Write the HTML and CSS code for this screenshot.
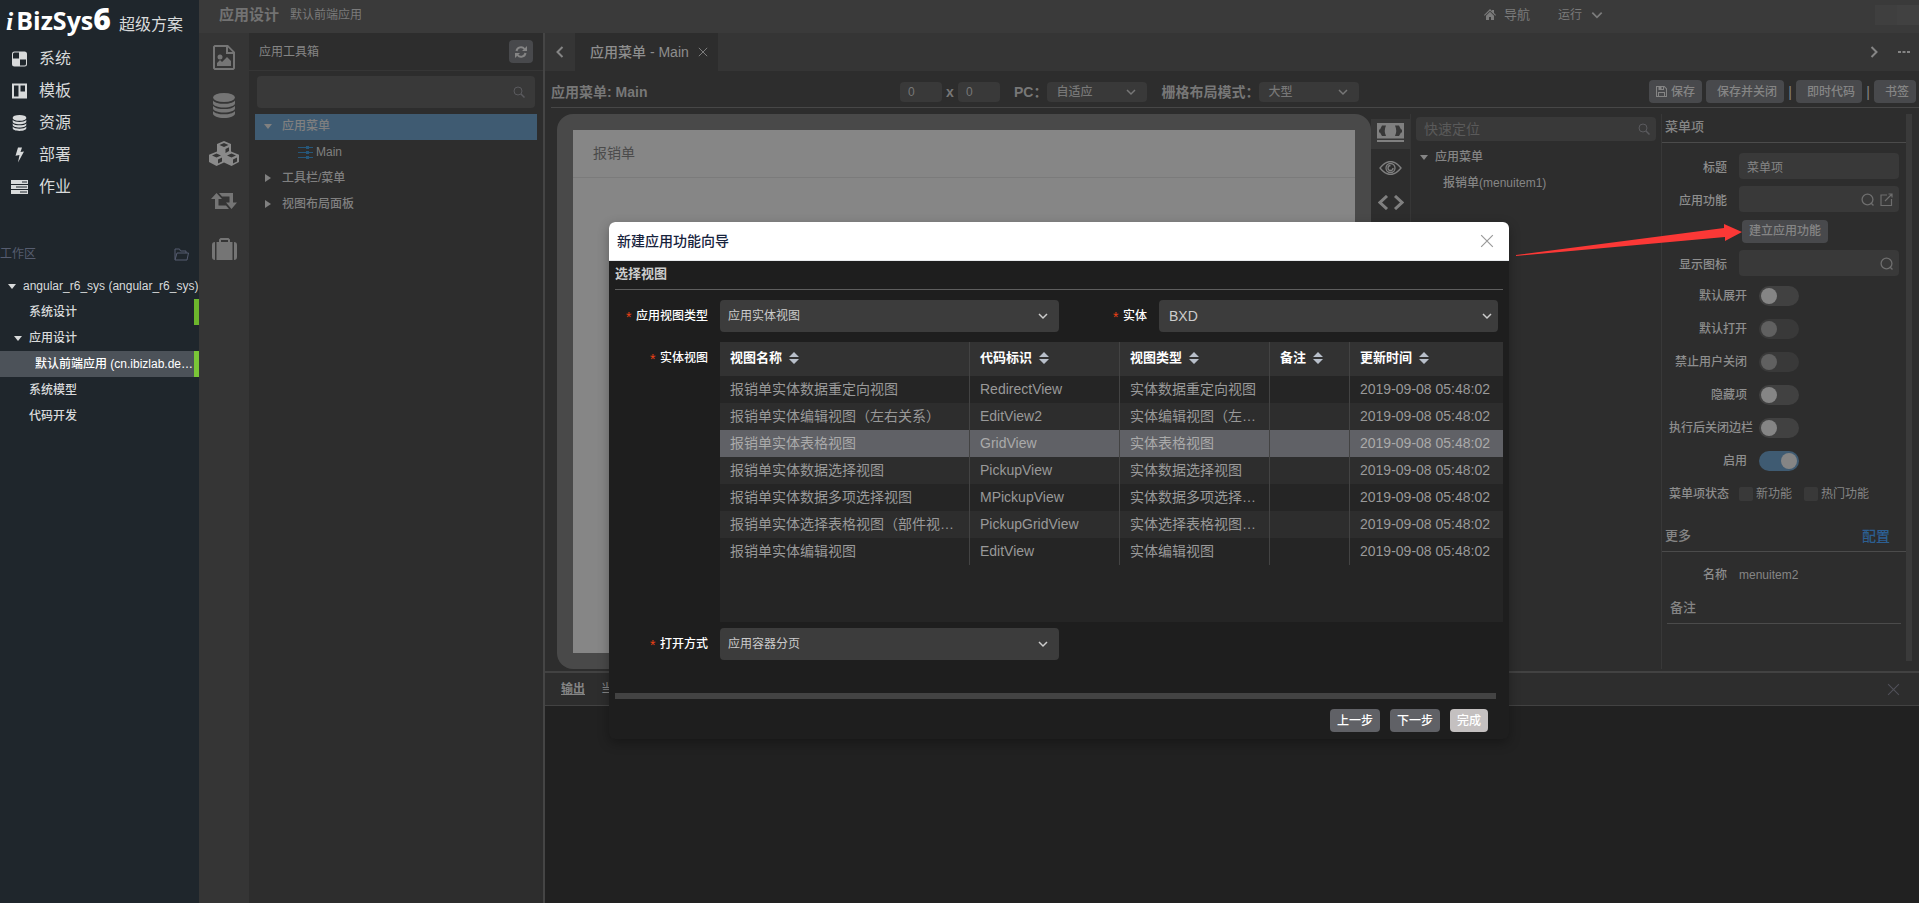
FILE: index.html
```html
<!DOCTYPE html>
<html lang="zh-CN">
<head>
    <meta charset="utf-8">
    <title>iBizSys6 应用设计</title>
    <link rel="stylesheet" href="styles.css">
</head>
<body>
    <svg class="sprite" aria-hidden="true">
        <symbol id="i-down" viewBox="0 0 12 12"><path d="M2 4l4 4 4-4" fill="none" stroke="currentColor" stroke-width="1.5"/></symbol>
        <symbol id="i-left" viewBox="0 0 12 12"><path d="M8.500 1L3.500 6l5 5" fill="none" stroke="currentColor" stroke-width="2"/></symbol>
        <symbol id="i-right" viewBox="0 0 12 12"><path d="M3.500 1l5 5-5 5" fill="none" stroke="currentColor" stroke-width="2"/></symbol>
        <symbol id="i-close" viewBox="0 0 12 12"><path d="M1 1l10 10M11 1L1 11" fill="none" stroke="currentColor"/></symbol>
        <symbol id="i-search" viewBox="0 0 12 12"><circle cx="5" cy="5" r="4" fill="none" stroke="currentColor"/><path d="M8 8l3.500 3.500" stroke="currentColor" stroke-width="1.500"/></symbol>
        <symbol id="i-find" viewBox="0 0 12 12"><circle cx="6" cy="6" r="5" fill="none" stroke="currentColor" stroke-width="1.200"/><path d="M9 9l2.500 2.500" stroke="currentColor" stroke-width="1.200"/></symbol>
        <symbol id="i-open" viewBox="0 0 13 13"><path d="M7 2H1v10.500h10.500V6M8.500 1H12v3.500M12 1L5 8" fill="none" stroke="currentColor" stroke-width="1.200"/></symbol>
        <symbol id="i-caret-down" viewBox="0 0 8 5"><path d="M0 0h8L4 5z" fill="currentColor"/></symbol>
        <symbol id="i-caret-right" viewBox="0 0 6 8"><path d="M0 0l6 4-6 4z" fill="currentColor"/></symbol>
        <symbol id="i-sort" viewBox="0 0 10 12"><path d="M5 0l5 5H0zM0 7h10l-5 5z" fill="currentColor"/></symbol>
        <symbol id="i-database" viewBox="0 0 22 25">
            <ellipse cx="11" cy="4.500" rx="11" ry="4.500"/>
            <path d="M0 7.500c2 2.600 6.500 3.300 11 3.300s9-.7 11-3.300v2.700c0 2.500-5 4.300-11 4.300S0 12.700 0 10.200z"/>
            <path d="M0 12.800c2 2.600 6.500 3.300 11 3.300s9-.7 11-3.300v2.500c0 2.500-5 4.300-11 4.300S0 17.800 0 15.300z"/>
            <path d="M0 18c2 2.600 6.500 3.300 11 3.300s9-.7 11-3.300v2.500C22 23 17 25 11 25S0 23 0 20.500z"/>
        </symbol>
    </svg>

    <aside class="sidebar">
        <div class="brand"><span class="brand-name"><i>i</i>BizSys<b>6</b></span><span class="brand-plan">超级方案</span></div>
        <nav class="main-nav">
            <a href="#"><svg viewBox="0 0 15 15"><path fill-rule="evenodd" d="M2.500 0h10A2.500 2.500 0 0 1 15 2.500v10a2.500 2.500 0 0 1-2.500 2.500h-10A2.500 2.500 0 0 1 0 12.500v-10A2.500 2.500 0 0 1 2.500 0zM1 7h6V1H2.500Q1 1 1 2.500zM8 8v6h4.500q1.500 0 1.500-1.500V8z"/></svg>系统</a>
            <a href="#"><svg viewBox="0 0 15 15"><path fill-rule="evenodd" d="M0 0h15v15H0zM2 2v11h4.500V2zM8.500 2v6H13V2z"/></svg>模板</a>
            <a href="#"><svg viewBox="0 0 22 25"><use href="#i-database"/></svg>资源</a>
            <a href="#"><svg viewBox="0 0 15 15"><path d="M6 0h4L8.500 4.500 12 4 6 15l1.500-7.500-4 .8z"/></svg>部署</a>
            <a href="#"><svg class="wide" viewBox="0 0 17 14"><path fill-rule="evenodd" d="M0 0h17v4H0zM0 5h17v4H0zM0 10h17v4H0zM11 1.500v1h5v-1zM5 6.500v1h11v-1zM9 11.500v1h7v-1z"/></svg>作业</a>
        </nav>
        <div class="zone"><span>工作区</span>
            <svg viewBox="0 0 15 13"><path d="M1 11.500V1h4.500l1 2H12v2M1 12l2-7h11.500L13 12z" fill="none" stroke="currentColor"/></svg>
        </div>
        <ul class="work-tree">
            <li><svg class="caret"><use href="#i-caret-down"/></svg><span>angular_r6_sys (angular_r6_sys)</span></li>
            <li class="lv2 marked"><span>系统设计</span></li>
            <li class="lv2 parent"><svg class="caret"><use href="#i-caret-down"/></svg><span>应用设计</span></li>
            <li class="lv3 marked selected"><span>默认前端应用 (cn.ibizlab.demo)</span></li>
            <li class="lv2"><span>系统模型</span></li>
            <li class="lv2"><span>代码开发</span></li>
        </ul>
    </aside>

    <div class="workspace">
        <header class="topbar">
            <h1>应用设计</h1>
            <span class="app-name">默认前端应用</span>
            <a class="top-nav" href="#"><svg viewBox="0 0 12 11"><path d="M6 0l2 2V1h2v3l2 2-.7.7L6 1.700.7 6.700 0 6zM6 2.800l4 3.900V11H7V8H5v3H2V6.700z"/></svg>导航</a>
            <a class="top-run" href="#">运行 <svg viewBox="0 0 12 12"><use href="#i-down"/></svg></a>
            <div class="user"><span></span><span></span></div>
        </header>

        <div class="columns">
            <nav class="rail">
                <a href="#" title="视图"><svg width="22" height="25" viewBox="0 0 22 25"><path fill-rule="evenodd" d="M1.500 0H15l7 7v16.500L20.500 25h-19L0 23.500v-22zM2 2v21h18V9h-7V2zM15 2.500V7h4.500z"/><circle cx="7" cy="12" r="2.500"/><path d="M4 21v-3l3-3 2 2 5-5 4 4v5z"/></svg></a>
                <a href="#" title="数据"><svg width="22" height="25"><use href="#i-database"/></svg></a>
                <a href="#" title="部件" class="on"><svg width="30" height="25" viewBox="0 0 30 25"><path fill-rule="evenodd" d="M15 0l7 3v7.500l8 3.200V21l-7.500 4-7.500-3.500L7.500 25 0 21v-7.300l8-3.200V3zM15 2l-4.500 2L15 6l4.500-2zM16.500 8v4l3.500-2V6.300zM7.500 12.500L3 14.500l4.500 2 4.500-2zM9 18.500v4l4-2v-4zM22.500 12.500l-4.500 2 4.500 2 4.500-2zM24 18.500v4l4-2v-4z"/></svg></a>
                <a href="#" title="流程"><svg width="26" height="16" viewBox="0 0 26 16"><path d="M5.500 0L11 6H7.500v6.500H15l3 3.500H4V6H0zM8 0h14v9.500h4L20.500 16 15 9.500h3.500v-6H11z"/></svg></a>
                <a href="#" title="工具"><svg width="25" height="22" viewBox="0 0 25 22"><path d="M3 4v18Q0 22 0 19V7q0-3 3-3zM22 4v18q3 0 3-3V7q0-3-3-3z"/><path fill-rule="evenodd" d="M4.500 4H7V1.500L8.500 0h8L18 1.500V4h2.500v18h-16zM9 2v2h7V2z"/></svg></a>
            </nav>

            <section class="toolbox">
                <div class="toolbox-head">
                    <h2>应用工具箱</h2>
                    <button type="button" class="btn refresh" aria-label="刷新"><svg width="12" height="12" viewBox="0 0 12 12"><path d="M1.500 5A4.500 4.500 0 0 1 9.500 3M10.500 7a4.500 4.500 0 0 1-8 2" fill="none" stroke="currentColor" stroke-width="2"/><path d="M12 0v5H7zM0 12V7h5z"/></svg></button>
                </div>
                <label class="box search"><input type="text" aria-label="搜索工具箱"><svg width="12" height="12"><use href="#i-search"/></svg></label>
                <ul class="tool-tree">
                    <li class="selected"><svg class="caret"><use href="#i-caret-down"/></svg>应用菜单</li>
                    <li class="leaf"><svg width="15" height="13" viewBox="0 0 15 13"><path d="M0 1.500h8M11 1.500h4M0 6.500h8M11 6.500h4M0 11.500h8M11 11.500h4" stroke="#26577a"/><path d="M9.500 0v3M9.500 5v3M9.500 10v3" stroke="#26577a" stroke-width="3"/></svg>Main</li>
                    <li><svg class="caret side"><use href="#i-caret-right"/></svg>工具栏/菜单</li>
                    <li><svg class="caret side"><use href="#i-caret-right"/></svg>视图布局面板</li>
                </ul>
            </section>

            <main class="editor">
                <div class="tabs">
                    <button type="button" class="tab-arrow" aria-label="向左"><svg width="12" height="12"><use href="#i-left"/></svg></button>
                    <div class="tab">应用菜单 - Main <button type="button" aria-label="关闭"><svg width="10" height="10"><use href="#i-close"/></svg></button></div>
                    <button type="button" class="tab-arrow next" aria-label="向右"><svg width="12" height="12"><use href="#i-right"/></svg></button>
                    <button type="button" class="tab-arrow" aria-label="更多"><svg width="12" height="12" viewBox="0 0 12 12"><path d="M0 5h3v2H0zM4.500 5h3v2h-3zM9 5h3v2H9z" fill="currentColor"/></svg></button>
                </div>

                <div class="toolbar">
                    <h2>应用菜单: Main</h2>
                    <div class="sizing">
                        <input class="box num" type="text" value="0" aria-label="宽度">
                        <b>x</b>
                        <input class="box num" type="text" value="0" aria-label="高度">
                        <label class="caption" for="pc">PC：</label>
                        <span class="pick"><select class="box" id="pc"><option>自适应</option></select><svg width="12" height="12"><use href="#i-down"/></svg></span>
                        <label class="caption" for="grid-mode">栅格布局模式：</label>
                        <span class="pick"><select class="box" id="grid-mode"><option>大型</option></select><svg width="12" height="12"><use href="#i-down"/></svg></span>
                    </div>
                    <div class="actions">
                        <button type="button" class="btn save"><svg width="11" height="11" viewBox="0 0 11 11"><path fill-rule="evenodd" d="M0 0h8.500L11 2.500V11H0zM1 1v9h1V6h7v4h1V3L8 1v3H2.500V1zM5.500 1v2H7V1zM3 7v3h5V7z"/></svg>保存</button>
                        <button type="button" class="btn">保存并关闭</button><i>|</i>
                        <button type="button" class="btn">即时代码</button><i>|</i>
                        <button type="button" class="btn">书签</button>
                    </div>
                </div>

                <div class="design">
                    <div class="device"><div class="screen"><div class="menu-item">报销单</div></div></div>

                    <nav class="mode-rail">
                        <a href="#" class="on" title="设计"><svg width="27" height="19" viewBox="0 0 27 19"><path fill-rule="evenodd" d="M0 0h27v15.500H0zM2 6.500v3h1l2 3.500h4Q6.500 8 9 2.500H5L3 6.500zM18 2.500Q20.500 8 18 13h4l2-3.500h1v-3h-1l-2-4zM0 17h27v2H0z"/></svg></a>
                        <a href="#" title="预览"><svg width="23" height="14" viewBox="0 0 23 14"><g fill="none" stroke="currentColor" stroke-width="1.300"><path d="M1 7Q11.500-6 22 7 11.500 20 1 7z"/><circle cx="11.500" cy="7" r="4.500"/><path d="M11.500 4.500A2.500 2.500 0 1 0 14 7"/></g></svg></a>
                        <a href="#" title="代码"><svg width="26" height="15" viewBox="0 0 26 15"><path d="M9 1L2 7.500 9 14M17 1l7 6.500L17 14" fill="none" stroke="currentColor" stroke-width="3"/></svg></a>
                    </nav>

                    <section class="outline">
                        <label class="box search small"><input type="text" placeholder="快速定位" aria-label="快速定位"><svg width="12" height="12"><use href="#i-search"/></svg></label>
                        <ul>
                            <li><svg class="caret"><use href="#i-caret-down"/></svg>应用菜单</li>
                            <li class="child">报销单(menuitem1)</li>
                        </ul>
                    </section>

                    <section class="props">
                        <div class="props-body">
                            <h3>菜单项</h3>
                            <div class="group">
                                <div class="field"><label for="p-title">标题</label><input class="box" id="p-title" type="text" value="菜单项"></div>
                                <div class="field"><label for="p-func">应用功能</label><span class="box with-icons"><input id="p-func" type="text"><svg width="13" height="13"><use href="#i-find"/></svg><svg width="13" height="13"><use href="#i-open"/></svg></span></div>
                                <div class="field create">
                                    <div class="create-wrap">
                                        <button type="button" class="btn">建立应用功能</button>
                                        <svg class="pointer" width="226" height="33" viewBox="0 0 226 33"><path d="M0 31L208 4V0l18 8-17 9v-4L0 32z" fill="#fb3836"/></svg>
                                    </div>
                                </div>
                                <div class="field"><label for="p-icon">显示图标</label><span class="box with-icons"><input id="p-icon" type="text"><svg width="13" height="13"><use href="#i-find"/></svg></span></div>
                                <div class="toggle"><label for="s1">默认展开</label><input type="checkbox" role="switch" id="s1"></div>
                                <div class="toggle"><label for="s2">默认打开</label><input type="checkbox" role="switch" id="s2" disabled></div>
                                <div class="toggle"><label for="s3">禁止用户关闭</label><input type="checkbox" role="switch" id="s3" disabled></div>
                                <div class="toggle"><label for="s4">隐藏项</label><input type="checkbox" role="switch" id="s4"></div>
                                <div class="toggle"><label for="s5">执行后关闭边栏</label><input type="checkbox" role="switch" id="s5"></div>
                                <div class="toggle"><label for="s6">启用</label><input type="checkbox" role="switch" id="s6" checked></div>
                                <div class="field states"><span>菜单项状态</span>
                                    <div class="checks">
                                        <label><input type="checkbox">新功能</label>
                                        <label><input type="checkbox">热门功能</label>
                                    </div>
                                </div>
                            </div>
                            <h3 class="more">更多 <a href="#">配置</a></h3>
                            <div class="group">
                                <div class="field"><span>名称</span><output>menuitem2</output></div>
                                <h3 class="inset">备注</h3>
                            </div>
                        </div>
                        <div class="scrollbar"></div>
                    </section>
                </div>

                <section class="output">
                    <div class="output-tabs">
                        <a href="#" class="on">输出</a>
                        <a href="#">当前</a>
                        <button type="button" aria-label="关闭输出"><svg width="13" height="13"><use href="#i-close"/></svg></button>
                    </div>
                </section>
            </main>
        </div>

        <div class="overlay">
            <div class="dialog" role="dialog" aria-labelledby="dlg-title">
                <div class="dialog-head"><h2 id="dlg-title">新建应用功能向导</h2><button type="button" aria-label="关闭"><svg width="14" height="14"><use href="#i-close"/></svg></button></div>
                <div class="dialog-body">
                    <h3>选择视图</h3>
                    <div class="form-row">
                        <label for="view-kind">应用视图类型</label>
                        <span class="pick"><select id="view-kind"><option>应用实体视图</option></select><svg width="12" height="12"><use href="#i-down"/></svg></span>
                        <label for="entity">实体</label>
                        <span class="pick entity"><select id="entity"><option>BXD</option></select><svg width="12" height="12"><use href="#i-down"/></svg></span>
                    </div>
                    <div class="form-row grid-row">
                        <label id="grid-label">实体视图</label>
                        <div class="grid">
                            <table aria-labelledby="grid-label">
                                <colgroup><col class="c-name"><col class="c-code"><col class="c-type"><col class="c-memo"><col></colgroup>
                                <thead>
                                    <tr>
                                        <th>视图名称<svg><use href="#i-sort"/></svg></th>
                                        <th>代码标识<svg><use href="#i-sort"/></svg></th>
                                        <th>视图类型<svg><use href="#i-sort"/></svg></th>
                                        <th>备注<svg><use href="#i-sort"/></svg></th>
                                        <th>更新时间<svg><use href="#i-sort"/></svg></th>
                                    </tr>
                                </thead>
                                <tbody>
                                    <tr><td>报销单实体数据重定向视图</td><td>RedirectView</td><td>实体数据重定向视图</td><td></td><td>2019-09-08 05:48:02</td></tr>
                                    <tr><td>报销单实体编辑视图（左右关系）</td><td>EditView2</td><td>实体编辑视图（左右关系）</td><td></td><td>2019-09-08 05:48:02</td></tr>
                                    <tr class="selected"><td>报销单实体表格视图</td><td>GridView</td><td>实体表格视图</td><td></td><td>2019-09-08 05:48:02</td></tr>
                                    <tr><td>报销单实体数据选择视图</td><td>PickupView</td><td>实体数据选择视图</td><td></td><td>2019-09-08 05:48:02</td></tr>
                                    <tr><td>报销单实体数据多项选择视图</td><td>MPickupView</td><td>实体数据多项选择视图</td><td></td><td>2019-09-08 05:48:02</td></tr>
                                    <tr><td>报销单实体选择表格视图（部件视图）</td><td>PickupGridView</td><td>实体选择表格视图（部件视图）</td><td></td><td>2019-09-08 05:48:02</td></tr>
                                    <tr><td>报销单实体编辑视图</td><td>EditView</td><td>实体编辑视图</td><td></td><td>2019-09-08 05:48:02</td></tr>
                                </tbody>
                            </table>
                        </div>
                    </div>
                    <div class="form-row open-row">
                        <label for="open-mode">打开方式</label>
                        <span class="pick"><select id="open-mode"><option>应用容器分页</option></select><svg width="12" height="12"><use href="#i-down"/></svg></span>
                    </div>
                    <div class="hscroll"></div>
                    <div class="dialog-foot">
                        <button type="button" class="btn">上一步</button>
                        <button type="button" class="btn">下一步</button>
                        <button type="button" class="btn finish">完成</button>
                    </div>
                </div>
            </div>
        </div>
    </div>
</body>
</html>
```

FILE: styles.css
```css
* {
    box-sizing: border-box;
}

body {
    margin: 0;
    display: flex;
    height: 100vh;
    overflow: hidden;
    background: #2d2d2d;
    color: #858585;
    font: 12px/18px "Liberation Sans", "Noto Sans CJK SC", sans-serif;
}

h1, h2, h3, ul {
    margin: 0;
    padding: 0;
    font-size: 12px;
    font-weight: normal;
}

ul {
    list-style: none;
}

a {
    color: inherit;
    text-decoration: none;
}

svg {
    flex: none;
    fill: currentColor;
}

button, input, select {
    margin: 0;
    padding: 0;
    border: 0;
    background: none;
    color: inherit;
    font: inherit;
}

.sprite {
    position: absolute;
    width: 0;
    height: 0;
}

.box {
    background: #393939;
    border-radius: 4px;
}

.btn {
    height: 23px;
    padding: 0 7px;
    border-radius: 4px;
    background: #48494c;
    font-weight: 500;
    white-space: nowrap;
}

.caret {
    width: 8px;
    height: 5px;
}

.caret.side {
    width: 6px;
    height: 8px;
}

/* select with its own arrow */
.pick {
    display: grid;
    align-items: center;
}

.pick select,
.pick svg {
    grid-area: 1 / 1;
}

.pick select {
    width: 100%;
    appearance: none;
}

.pick svg {
    justify-self: end;
    margin-right: 10px;
    pointer-events: none;
}

/* left sidebar */
.sidebar {
    flex: none;
    width: 199px;
    background: #1f262c;
    color: #d8dadb;
}

.brand {
    display: flex;
    align-items: baseline;
    height: 43px;
    padding-left: 6px;
    color: #fff;
    line-height: 38px;
}

.brand-name {
    width: 113px;
    font-family: "Open Sans", sans-serif;
    font-size: 25px;
    font-weight: bold;
}

.brand-name i {
    margin-right: 3px;
    font-family: "Liberation Serif", serif;
    font-size: 26px;
}

.brand-name b {
    font-size: 30px;
}

.brand-plan {
    font-size: 16px;
    color: #d8dadb;
}

.main-nav a {
    display: flex;
    align-items: center;
    gap: 12px;
    height: 32px;
    padding-left: 12px;
    font-size: 16px;
}

.main-nav svg {
    width: 15px;
    height: 16px;
}

.main-nav svg.wide {
    width: 17px;
    margin: 0 -1px;
}

.zone {
    display: flex;
    align-items: center;
    justify-content: space-between;
    margin-top: 42px;
    padding-right: 10px;
    height: 18px;
    color: #565d70;
}

.zone svg {
    width: 15px;
    height: 13px;
}

.work-tree {
    margin-top: 10px;
    font-weight: 500;
}

.work-tree li {
    display: flex;
    align-items: center;
    gap: 7px;
    height: 26px;
    padding-left: 8px;
    white-space: nowrap;
}

.work-tree .lv2 {
    padding-left: 29px;
}

.work-tree .parent {
    padding-left: 14px;
}

.work-tree .lv3 {
    padding-left: 35px;
}

.work-tree .marked {
    border-right: 5px solid #6cb62c;
}

.work-tree .selected {
    border-color: #7ac537;
    background: #4c5259;
    color: #fff;
}

.work-tree .lv3 span {
    overflow: hidden;
    text-overflow: ellipsis;
}

/* workspace */
.workspace {
    position: relative;
    flex: 1;
    min-width: 0;
    display: flex;
    flex-direction: column;
}

.topbar {
    display: flex;
    align-items: center;
    flex: none;
    height: 33px;
    padding: 0 0 4px 20px;
    background: #3a3a3a;
    color: #7b7b7b;
}

.topbar h1 {
    margin-right: 11px;
    font-size: 15px;
    font-weight: bold;
    color: #727272;
}

.app-name {
    flex: 1;
}

.top-nav {
    display: flex;
    align-items: center;
    gap: 8px;
    font-size: 13px;
}

.top-nav svg {
    width: 12px;
    height: 11px;
}

.top-run {
    display: flex;
    align-items: center;
    gap: 8px;
    margin: 0 271px 0 28px;
}

.top-run svg {
    width: 14px;
    height: 14px;
}

.user {
    display: flex;
    width: 44px;
    height: 20px;
    background: #3e3e3e;
}

.user span {
    flex: 1;
    background: #3f3f3f;
}

.user span + span {
    background: #414141;
}

.columns {
    flex: 1;
    display: flex;
    min-height: 0;
}

.rail {
    flex: none;
    width: 50px;
    background: #353535;
    color: #757575;
}

.rail a {
    display: flex;
    align-items: center;
    justify-content: center;
    height: 48px;
}

.rail a.on {
    color: #8a8a8a;
}

.toolbox {
    flex: none;
    width: 296px;
    border-right: 2px solid #454545;
}

.toolbox-head {
    display: flex;
    align-items: center;
    justify-content: space-between;
    height: 38px;
    padding: 0 10px;
    border-bottom: 1px solid #363636;
}

.refresh {
    display: flex;
    align-items: center;
    width: 24px;
    padding: 0 6px;
}

.search {
    display: flex;
    align-items: center;
    height: 32px;
    margin: 5px 8px 6px;
    padding: 0 10px;
    color: #5a5a5e;
}

.search input {
    flex: 1;
    min-width: 0;
    font-size: 14px;
    color: #858585;
}

.search input::placeholder {
    color: #5a5a5a;
}

.search.small {
    height: 24px;
    margin: 3px 5px;
    padding: 0 6px 0 8px;
}

.tool-tree {
    margin: 0 6px;
    font-weight: 500;
    color: #808080;
}

.tool-tree li {
    display: flex;
    align-items: center;
    gap: 10px;
    height: 26px;
    padding: 0 0 2px 9px;
}

.tool-tree .side {
    margin: 0 1px;
}

.tool-tree .leaf {
    gap: 3px;
    padding-left: 43px;
}

.tool-tree .selected {
    background: #3f5b72;
}

/* editor */
.editor {
    flex: 1;
    min-width: 0;
    display: flex;
    flex-direction: column;
}

.tabs {
    display: flex;
    flex: none;
    height: 38px;
    background: #353535;
}

.tab-arrow {
    display: flex;
    align-items: center;
    justify-content: center;
    width: 30px;
}

.tab-arrow.next {
    margin-left: auto;
}

.tab {
    display: flex;
    align-items: center;
    gap: 9px;
    padding: 0 10px 0 15px;
    background: #2d2d2d;
    color: #8e8e8e;
    font-size: 14px;
    font-weight: 500;
}

.tab button {
    display: flex;
}

.toolbar {
    display: flex;
    align-items: center;
    flex: none;
    height: 37px;
    margin-left: 6px;
    padding-top: 5px;
    border-bottom: 1px solid #474747;
}

.toolbar h2 {
    flex: 0 1 349px;
    font-size: 14px;
    font-weight: bold;
    white-space: nowrap;
    color: #777;
}

.sizing {
    display: flex;
    align-items: center;
    font-size: 14px;
    font-weight: bold;
    white-space: nowrap;
    color: #777;
}

.sizing b {
    width: 16px;
    text-align: center;
}

.num {
    width: 42px;
    height: 20px;
    padding-left: 8px;
    font-size: 12px;
    font-weight: normal;
}

.caption {
    margin-left: 14px;
}

.sizing .pick {
    width: 100px;
    font-size: 12px;
    font-weight: 500;
}

.sizing select {
    height: 20px;
    padding-left: 9px;
}

.actions {
    flex: 1;
    display: flex;
    align-items: center;
    justify-content: flex-end;
    padding-right: 3px;
}

.actions .btn {
    padding-left: 11px;
}

.actions .save {
    display: flex;
    align-items: center;
    gap: 4px;
    margin-right: 4px;
    padding-left: 7px;
}

.actions i {
    width: 12px;
    font-size: 14px;
    font-style: normal;
    text-align: center;
}

.design {
    flex: 1;
    display: flex;
    min-height: 0;
    padding: 6px 7px 2px 12px;
}

.device {
    flex: 1;
    padding: 16px;
    border-radius: 16px;
    background: #494949;
}

.screen {
    height: 100%;
    background: #868686;
}

.menu-item {
    height: 48px;
    padding-left: 20px;
    border-bottom: 1px solid #7b7b7b;
    color: #4b4b4b;
    font-size: 14px;
    line-height: 46px;
}

.mode-rail {
    width: 40px;
    padding-top: 5px;
    border-right: 1px solid #363636;
    color: #808080;
}

.mode-rail a {
    display: flex;
    align-items: center;
    justify-content: center;
    height: 30px;
    margin-bottom: 5px;
    padding-bottom: 3px;
}

.mode-rail .on {
    background: #383838;
}

.outline {
    width: 251px;
    border-right: 1px solid #383838;
}

.outline li {
    display: flex;
    align-items: center;
    gap: 7px;
    height: 26px;
    padding-left: 9px;
    font-weight: 500;
}

.outline .child {
    padding-left: 32px;
}

/* property panel */
.props {
    flex: none;
    display: flex;
    width: 250px;
}

.props-body {
    flex: 1;
}

.props h3 {
    height: 29px;
    padding: 0 3px;
    border-bottom: 1px solid #4b4b4b;
    font-size: 13px;
    font-weight: 500;
    line-height: 26px;
}

.props h3.inset {
    margin: 0 5px;
}

.props .more {
    display: flex;
    justify-content: space-between;
    margin-top: 16px;
    padding-right: 16px;
}

.more a {
    color: #2c5f92;
    font-size: 14px;
}

.group {
    padding-top: 10px;
}

.field {
    display: grid;
    grid-template-columns: 65px 160px;
    column-gap: 12px;
    align-items: center;
    height: 26px;
    margin-bottom: 7px;
}

.field > label,
.field > span:first-child,
.toggle label {
    font-weight: 500;
    text-align: right;
    white-space: nowrap;
    color: #8e8e8e;
}

.field > label {
    padding-top: 3px;
}

.field > .box {
    width: 100%;
    height: 26px;
    padding: 0 6px 0 8px;
}

.with-icons {
    display: flex;
    align-items: center;
    gap: 6px;
    color: #6e6e6e;
}

.with-icons input {
    flex: 1;
    min-width: 0;
}

.field.create {
    height: 24px;
}

.create-wrap {
    position: relative;
    grid-column: 2;
    margin-left: 3px;
}

/* red pointer drawn across the panels to the button */
.pointer {
    position: absolute;
    right: 100%;
    top: 4px;
}

.toggle {
    display: flex;
    align-items: center;
    gap: 12px;
    height: 26px;
    margin-bottom: 7px;
    padding-left: 7px;
}

.toggle label {
    width: 78px;
}

.toggle input {
    display: flex;
    align-items: center;
    width: 40px;
    height: 20px;
    padding: 0 2px;
    border-radius: 10px;
    background: #414141;
    appearance: none;
}

.toggle input::before {
    content: "";
    width: 16px;
    height: 16px;
    border-radius: 50%;
    background: #858585;
}

.toggle input:disabled {
    background: #393939;
}

.toggle input:disabled::before {
    background: #606060;
}

.toggle input:checked {
    justify-content: flex-end;
    background: #3f5b72;
}

.group .states {
    column-gap: 10px;
    grid-template-columns: 67px 160px;
    margin-bottom: 0;
}

.checks {
    display: flex;
    gap: 12px;
}

.checks label {
    display: flex;
    align-items: center;
    gap: 3px;
    white-space: nowrap;
}

.checks input {
    width: 14px;
    height: 14px;
    border-radius: 2px;
    background: #393939;
    appearance: none;
}

.scrollbar {
    width: 6px;
    margin-bottom: 8px;
    background: #3a3a3a;
}

/* output panel */
.output {
    flex: none;
    height: 232px;
    border-top: 2px solid #424242;
    background: #212121;
}

.output-tabs {
    display: flex;
    align-items: center;
    gap: 16px;
    height: 33px;
    padding: 0 19px 0 16px;
    border-bottom: 1px solid #424242;
    background: #2d2d2d;
}

.output-tabs .on {
    font-weight: bold;
    text-decoration: underline;
}

.output-tabs button {
    display: flex;
    margin-left: auto;
    color: #505058;
}

/* wizard dialog */
.overlay {
    position: absolute;
    inset: 0;
    display: flex;
    justify-content: center;
    align-items: flex-start;
    padding-top: 222px;
    pointer-events: none;
}

.dialog {
    width: 900px;
    border-radius: 6px;
    background: #1e1e1e;
    box-shadow: 0 4px 12px rgba(0, 0, 0, .3);
    color: #ccc;
    pointer-events: auto;
}

.dialog-head {
    display: flex;
    align-items: center;
    justify-content: space-between;
    height: 39px;
    padding: 0 15px 0 8px;
    border-bottom: 1px solid #e8eaec;
    border-radius: 6px 6px 0 0;
    background: #fff;
    color: #999;
}

.dialog-head h2 {
    color: #17233d;
    font-size: 14px;
    font-weight: 500;
}

.dialog-head button {
    display: flex;
}

.dialog-body {
    padding: 0 6px 7px;
}

.dialog h3 {
    height: 29px;
    border-bottom: 1px solid #5e5e5e;
    font-size: 13px;
    font-weight: bold;
    line-height: 26px;
}

.form-row {
    display: grid;
    grid-template-columns: 93px 1fr 76px 1fr;
    column-gap: 12px;
    margin-top: 10px;
    padding-right: 5px;
}

.form-row label {
    color: #fff;
    font-weight: 500;
    line-height: 32px;
    text-align: right;
}

.form-row label::before {
    content: "*";
    margin-right: 3px;
    color: #ed4014;
    font-family: "Liberation Mono", monospace;
    font-size: 14px;
    line-height: 1;
    vertical-align: -3px;
}

.dialog select {
    height: 32px;
    padding-left: 8px;
    border-radius: 4px;
    background: #3c3c3c;
}

.dialog .entity select {
    padding-left: 10px;
    font-size: 14px;
}

.dialog .entity svg {
    margin-right: 5px;
}

.form-row.grid-row {
    grid-template-columns: 93px 1fr;
    padding-right: 0;
}

.form-row.open-row {
    margin-top: 6px;
}

.grid {
    min-width: 0;
    height: 280px;
    background: #252525;
}

.grid table {
    width: 100%;
    table-layout: fixed;
    border-spacing: 0;
    color: #999;
    font-size: 14px;
}

.c-name {
    width: 250px;
}

.c-code, .c-type {
    width: 150px;
}

.c-memo {
    width: 80px;
}

.grid th, .grid td {
    height: 27px;
    padding: 0 10px 2px;
    border-right: 1px solid #434343;
    overflow: hidden;
    text-align: left;
    text-overflow: ellipsis;
    white-space: nowrap;
}

.grid th:last-child, .grid td:last-child {
    border-right: 0;
}

.grid th {
    height: 34px;
    background: #323232;
    color: #fff;
    font-size: 13px;
}

.grid th svg {
    width: 10px;
    height: 12px;
    margin-left: 7px;
    color: #b8bfca;
    vertical-align: -2px;
}

.grid tbody tr:nth-child(even) {
    background: #2d2d2d;
}

.grid tbody .selected {
    background: #606166;
    color: #aaa;
}

.hscroll {
    height: 6px;
    margin: 33px 7px 10px 0;
    background: #434343;
}

.dialog-foot {
    display: flex;
    justify-content: flex-end;
    gap: 10px;
    padding-right: 15px;
}

.dialog-foot .btn {
    background: #606166;
    color: #fff;
}

.dialog-foot .finish {
    background: #c4c0c0;
}
```
